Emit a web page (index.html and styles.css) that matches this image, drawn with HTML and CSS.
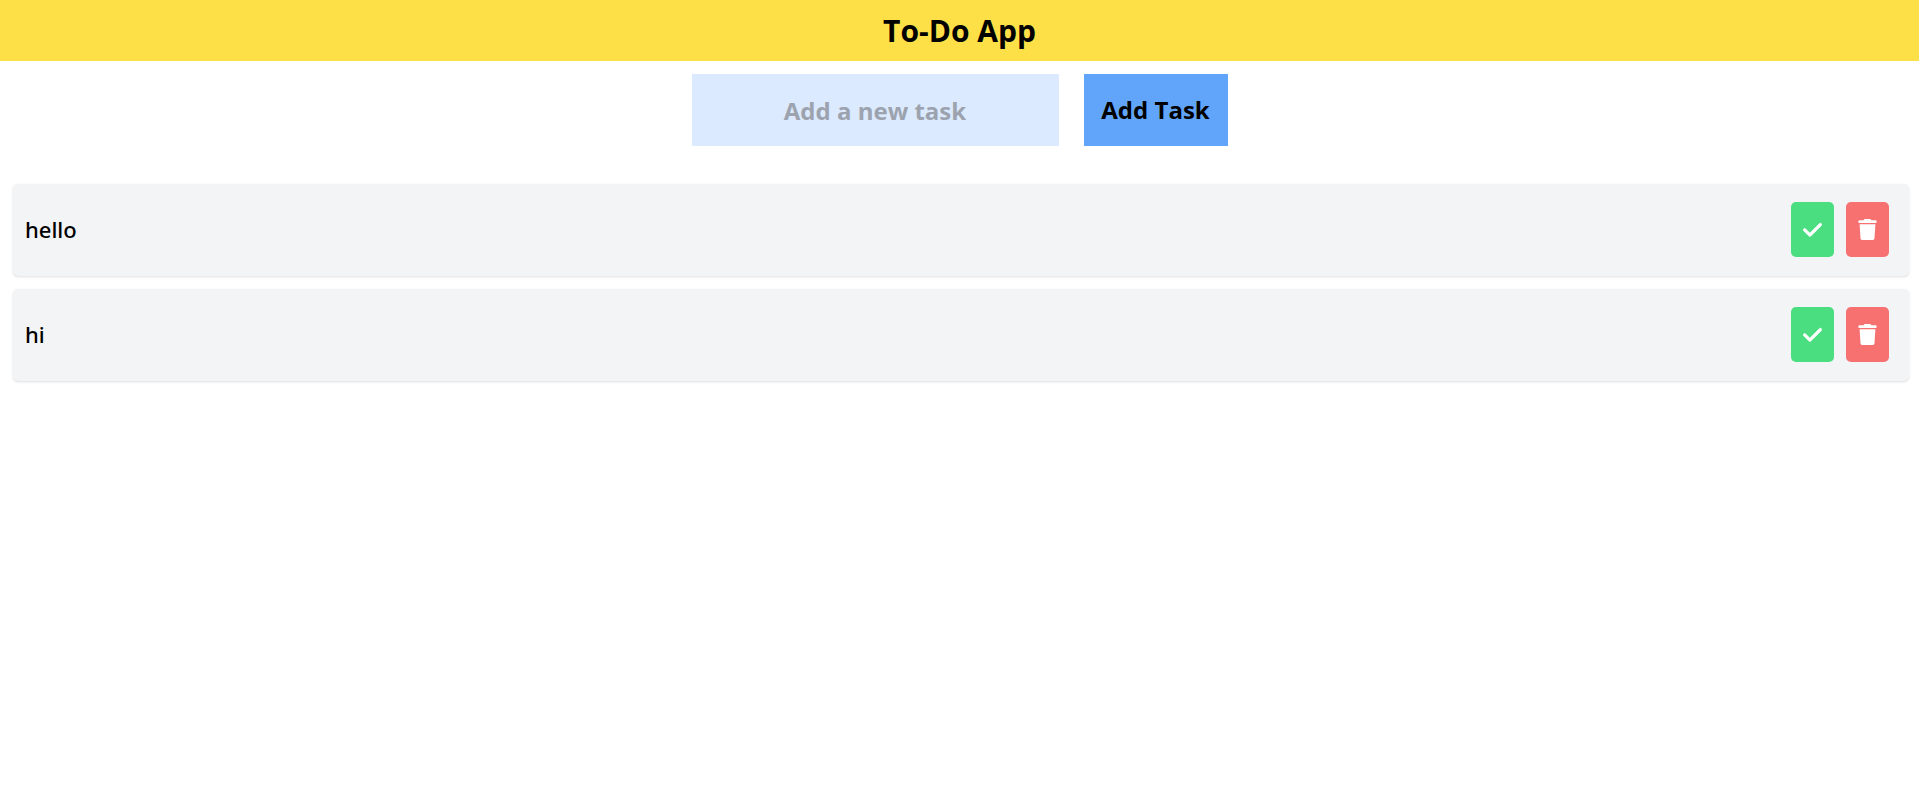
FILE: index.html
```html
<!DOCTYPE html>
<html lang="en">
<head>
<meta charset="utf-8">
<meta name="viewport" content="width=device-width, initial-scale=1">
<title>To-Do App</title>
<link rel="stylesheet" href="styles.css">
</head>
<body>
<svg class="sprite" aria-hidden="true">
  <symbol id="check" viewBox="0 0 448 512"><path stroke="currentColor" stroke-width="20" d="M438.6 113.4c12.5 12.5 12.5 32.8 0 45.3l-256 256c-12.5 12.5-32.8 12.5-45.3 0l-128-128c-12.5-12.5-12.5-32.8 0-45.3s32.8-12.5 45.3 0L160 346.7 393.4 113.4c12.5-12.5 32.8-12.5 45.3 0z"/></symbol>
  <symbol id="trash" viewBox="0 0 448 512"><path d="M135.2 17.7L128 32H32C14.3 32 0 46.3 0 64S14.3 96 32 96H416c17.7 0 32-14.3 32-32s-14.3-32-32-32H320l-7.2-14.3C307.4 6.8 296.3 0 284.2 0H163.8c-12.1 0-23.2 6.8-28.6 17.7zM416 128H32L53.2 467c1.6 25.3 22.6 45 47.9 45H346.9c25.3 0 46.3-19.7 47.9-45L416 128z"/></symbol>
</svg>
<header class="header"><h1 class="title">To-Do App</h1></header>
<main>
  <form class="task-form">
    <input class="task-input" type="text" placeholder="Add a new task" aria-label="Add a new task">
    <button class="add-button" type="button">Add Task</button>
  </form>
  <ul class="task-list">
    <li class="task">
      <span class="task-name">hello</span>
      <div class="actions">
        <button class="action done" type="button" aria-label="Complete hello"><svg class="icon"><use href="#check"/></svg></button>
        <button class="action delete" type="button" aria-label="Delete hello"><svg class="icon"><use href="#trash"/></svg></button>
      </div>
    </li>
    <li class="task">
      <span class="task-name">hi</span>
      <div class="actions">
        <button class="action done" type="button" aria-label="Complete hi"><svg class="icon"><use href="#check"/></svg></button>
        <button class="action delete" type="button" aria-label="Delete hi"><svg class="icon"><use href="#trash"/></svg></button>
      </div>
    </li>
  </ul>
</main>
</body>
</html>
```
FILE: styles.css
```css
* { box-sizing: border-box; }
body {
  margin: 0;
  background: #fff;
  color: #000;
  font-family: "Segoe UI", "Open Sans", "Noto Sans", sans-serif;
}
button, input { border: 0; font: inherit; color: inherit; }
.sprite { display: none; }
.header {
  padding: 12px;
  background: #fde047;
  text-align: center;
}
.title { margin: 0; font-size: 30px; line-height: 37px; font-weight: 700; }
.task-form {
  display: flex;
  justify-content: center;
  gap: 25px;
  padding: 13px 12px;
}
.task-input, .add-button {
  height: 72px;
  font-size: 24px;
  line-height: 32px;
  font-weight: 700;
  text-align: center;
}
.task-input { width: 367px; padding: 20px; background: #dbeafe; }
.task-input::placeholder { color: #9ca3af; opacity: 1; }
.add-button { width: 144px; padding: 0; background: #60a5fa; }
.task-list {
  display: grid;
  gap: 13px;
  margin: 0;
  padding: 25px 10px 25px 13px;
  list-style: none;
}
.task {
  display: flex;
  align-items: center;
  justify-content: space-between;
  padding: 18px 20px 19px 12px;
  background: #f3f4f6;
  border-radius: 5px;
  box-shadow: 0 1px 3px rgb(0 0 0 / 10%), 0 1px 2px -1px rgb(0 0 0 / 10%);
}
.task-name { padding-bottom: 2px; font-family: "Segoe UI", "Noto Sans", sans-serif; font-size: 22px; line-height: 32px; font-weight: 500; }
.actions { display: flex; gap: 12px; }
.action {
  display: grid;
  place-items: center;
  width: 43px;
  height: 55px;
  padding: 0;
  border-radius: 5px;
  color: #fff;
}
.done { background: #4ade80; }
.delete { background: #f87171; }
.icon { width: 19px; height: 21px; fill: currentColor; }
```
